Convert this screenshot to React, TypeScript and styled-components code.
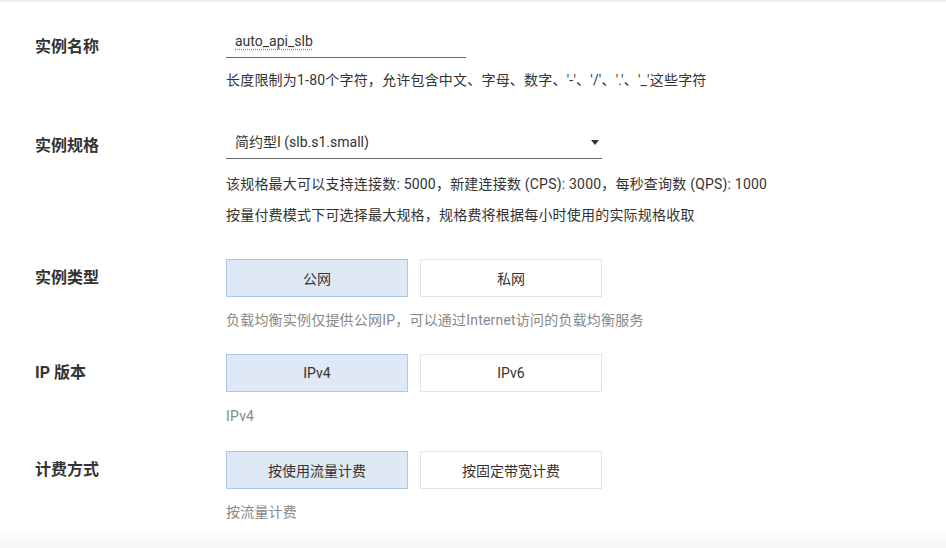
import React from "react";
import styled, { createGlobalStyle } from "styled-components";

const Global = createGlobalStyle`
  html, body { margin: 0; padding: 0; background: #fff; }
  body { font-family: Roboto, "Noto Sans CJK SC", sans-serif; color: #333; }
  * { box-sizing: border-box; }
`;

const Page = styled.div`
  width: 946px;
  height: 548px;
  display: flex;
  flex-direction: column;
  border-top: 2px solid #ececec;
  overflow: hidden;
`;

const Form = styled.div`
  flex: 1;
  display: flex;
  flex-direction: column;
  padding-left: 35px;
`;

const Row = styled.div<{ $mt: number }>`
  display: grid;
  grid-template-columns: 191px 376px;
  align-items: start;
  margin-top: ${(p) => p.$mt}px;
`;

const Label = styled.div<{ $offset: number }>`
  font-size: 16px;
  font-weight: bold;
  line-height: 38px;
  height: 38px;
  color: #333;
  margin-top: ${(p) => p.$offset}px;
  white-space: nowrap;
`;

const Control = styled.div`
  display: flex;
  flex-direction: column;
`;

const InputBox = styled.div`
  width: 240px;
  height: 33px;
  line-height: 32px;
  padding-left: 9px;
  font-size: 14px;
  color: #333;
  border-bottom: 1px solid #666;
`;

const Spell = styled.span`
  text-decoration: underline dotted #e06060;
  text-underline-offset: 3px;
`;

const SelectBox = styled.div`
  width: 376px;
  height: 33px;
  padding: 0 3px 3px 9px;
  font-size: 14px;
  color: #333;
  border-bottom: 1px solid #666;
  display: flex;
  align-items: center;
  justify-content: space-between;
`;

const Caret = styled.span`
  width: 0;
  height: 0;
  border-left: 4px solid transparent;
  border-right: 4px solid transparent;
  border-top: 5px solid #333;
  margin-top: 3px;
`;

const Help = styled.div<{ $mt: number; $muted?: boolean }>`
  font-size: 14px;
  line-height: 20px;
  letter-spacing: 0.2px;
  margin-top: ${(p) => p.$mt}px;
  color: ${(p) => (p.$muted ? "#888" : "#333")};
  white-space: nowrap;
`;

const Options = styled.div`
  display: flex;
  gap: 12px;
`;

const Option = styled.button<{ $active?: boolean }>`
  width: 182px;
  height: 38px;
  padding: 0;
  font-family: Roboto, "Noto Sans CJK SC", sans-serif;
  font-size: 14px;
  color: #333;
  background: ${(p) => (p.$active ? "#dfe8f5" : "#fff")};
  border: 1px solid ${(p) => (p.$active ? "#aac8ea" : "#e4e4e4")};
  cursor: pointer;
`;

const Footer = styled.div`
  height: 20px;
  background: linear-gradient(#ffffff, #f5f5f5);
`;

export default function App() {
  return (
    <>
      <Global />
      <Page>
        <Form>
          <Row $mt={23}>
            <Label $offset={3}>实例名称</Label>
            <Control>
              <InputBox>
                <Spell>auto_api_slb</Spell>
              </InputBox>
              <Help $mt={12}>
                长度限制为1-80个字符，允许包含中文、字母、数字、'-'、'/'、'.'、'_'这些字符
              </Help>
            </Control>
          </Row>
          <Row $mt={36}>
            <Label $offset={1}>实例规格</Label>
            <Control>
              <SelectBox>
                <span>简约型I (slb.s1.small)</span>
                <Caret />
              </SelectBox>
              <Help $mt={15}>
                该规格最大可以支持连接数: 5000，新建连接数 (CPS): 3000，每秒查询数 (QPS): 1000
              </Help>
              <Help $mt={11}>按量付费模式下可选择最大规格，规格费将根据每小时使用的实际规格收取</Help>
            </Control>
          </Row>
          <Row $mt={34}>
            <Label $offset={0}>实例类型</Label>
            <Control>
              <Options>
                <Option $active>公网</Option>
                <Option>私网</Option>
              </Options>
              <Help $mt={13} $muted>
                负载均衡实例仅提供公网IP，可以通过Internet访问的负载均衡服务
              </Help>
            </Control>
          </Row>
          <Row $mt={24}>
            <Label $offset={0}>IP 版本</Label>
            <Control>
              <Options>
                <Option $active>IPv4</Option>
                <Option>IPv6</Option>
              </Options>
              <Help $mt={14} $muted>
                IPv4
              </Help>
            </Control>
          </Row>
          <Row $mt={25}>
            <Label $offset={0}>计费方式</Label>
            <Control>
              <Options>
                <Option $active>按使用流量计费</Option>
                <Option>按固定带宽计费</Option>
              </Options>
              <Help $mt={13} $muted>
                按流量计费
              </Help>
            </Control>
          </Row>
        </Form>
        <Footer />
      </Page>
    </>
  );
}
